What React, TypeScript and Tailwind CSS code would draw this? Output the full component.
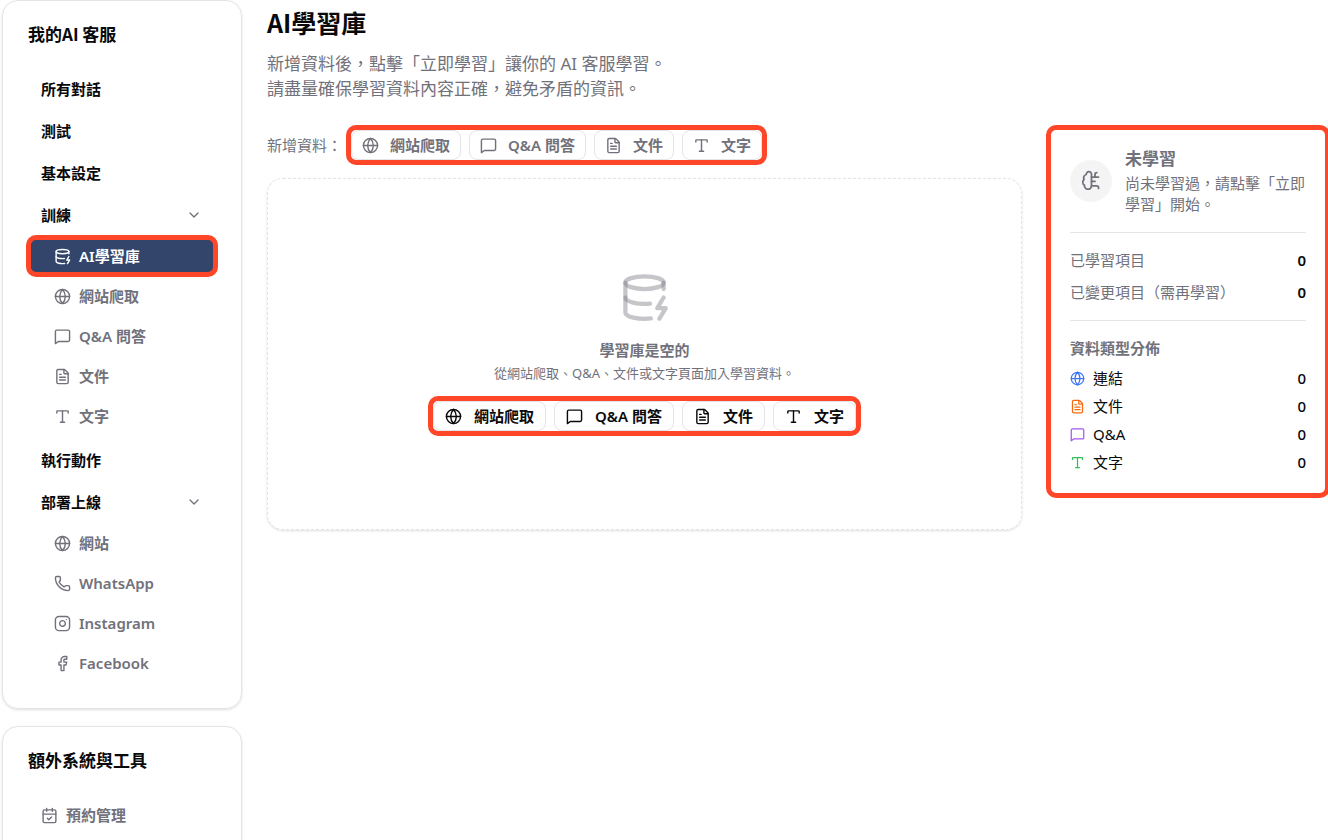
import React from 'react';
import { ChevronDown, DatabaseZap, Facebook, FileText, Globe, Instagram, Phone, Type } from 'lucide-react';

type IconType = React.ComponentType<{ className?: string }>;

const Svg: React.FC<{ className?: string; children: React.ReactNode }> = ({ className, children }) => (
  <svg
    className={className}
    viewBox="0 0 24 24"
    fill="none"
    stroke="currentColor"
    strokeWidth={2}
    strokeLinecap="round"
    strokeLinejoin="round"
    aria-hidden="true"
  >
    {children}
  </svg>
);

const MessageIcon: IconType = ({ className }) => (
  <Svg className={className}>
    <path d="M22 17a2 2 0 0 1-2 2H6l-4 3V5a2 2 0 0 1 2-2h16a2 2 0 0 1 2 2z" />
  </Svg>
);

const BrainIcon: IconType = ({ className }) => (
  <Svg className={className}>
    <path d="M12 5a3 3 0 1 0-5.997.125 4 4 0 0 0-2.526 5.77 4 4 0 0 0 .556 6.588A4 4 0 1 0 12 18Z" />
    <path d="M12 13h4M12 18h6a2 2 0 0 1 2 2v1M12 8h8M16 8V5a2 2 0 0 1 2-2" />
  </Svg>
);

const CalendarCheckIcon: IconType = ({ className }) => (
  <Svg className={className}>
    <path d="M8 2v4M16 2v4M3 10h18M9 16l2 2 4-4" />
    <rect width="18" height="18" x="3" y="4" rx="2" />
  </Svg>
);

const sources: { label: string; icon: IconType }[] = [
  { label: '網站爬取', icon: Globe },
  { label: 'Q&A 問答', icon: MessageIcon },
  { label: '文件', icon: FileText },
  { label: '文字', icon: Type },
];

const channels: { label: string; icon: IconType }[] = [
  { label: '網站', icon: Globe },
  { label: 'WhatsApp', icon: Phone },
  { label: 'Instagram', icon: Instagram },
  { label: 'Facebook', icon: Facebook },
];

const distribution: { label: string; icon: IconType; color: string }[] = [
  { label: '連結', icon: Globe, color: 'text-[#3b76f6]' },
  { label: '文件', icon: FileText, color: 'text-[#f76b10]' },
  { label: 'Q&A', icon: MessageIcon, color: 'text-[#a855f7]' },
  { label: '文字', icon: Type, color: 'text-[#34bd59]' },
];

const NavLink: React.FC<{ label: string }> = ({ label }) => (
  <a href="#" className="flex h-[42px] items-center px-[13px] text-[15px] font-semibold text-zinc-950">
    {label}
  </a>
);

const NavGroup: React.FC<{ label: string; children: React.ReactNode }> = ({ label, children }) => (
  <div className="pb-[3px]">
    <button className="flex h-[42px] w-full items-center justify-between px-[13px] text-[15px] font-semibold text-zinc-950">
      {label}
      <ChevronDown className="mr-px size-4 text-zinc-500" />
    </button>
    {children}
  </div>
);

const SubLink: React.FC<{ label: string; icon: IconType }> = ({ label, icon: Icon }) => (
  <a href="#" className="flex h-10 items-center gap-2 px-[26px] text-[15px] font-semibold text-zinc-500">
    <Icon className="size-[17px] shrink-0" />
    {label}
  </a>
);

const SourceButtons: React.FC<{ muted?: boolean }> = ({ muted }) => (
  <div
    className={`flex gap-2 rounded-[10px] border-[5px] border-[#ff4628] ${muted ? 'text-zinc-500' : 'text-zinc-950'}`}
  >
    {sources.map(({ label, icon: Icon }) => (
      <button
        key={label}
        className={`flex h-[30px] items-center rounded-lg border border-zinc-200 text-[15px] font-semibold ${
          muted ? 'gap-[11px] px-[10px]' : 'gap-3 px-[11px]'
        }`}
      >
        <Icon className="size-[17px]" />
        {label}
      </button>
    ))}
  </div>
);

const Sidebar: React.FC = () => (
  <aside className="flex w-60 shrink-0 flex-col gap-[17px]">
    <nav className="rounded-2xl border border-zinc-200 px-[25px] pb-[22px] shadow-sm">
      <h2 className="pt-5 pb-[22px] font-['Noto_Sans_CJK_TC',sans-serif] text-[17px] leading-[25px] font-bold text-zinc-950">
        我的AI 客服
      </h2>
      <NavLink label="所有對話" />
      <NavLink label="測試" />
      <NavLink label="基本設定" />
      <NavGroup label="訓練">
        <a
          href="#"
          className="-mx-[2px] -my-px flex h-[42px] items-center gap-2 rounded-[10px] border-[5px] border-[#ff4628] bg-[#33456b] px-[23px] text-[15px] font-semibold text-white"
        >
          <DatabaseZap className="size-[17px]" />
          AI學習庫
        </a>
        {sources.map((item) => (
          <SubLink key={item.label} {...item} />
        ))}
      </NavGroup>
      <NavLink label="執行動作" />
      <NavGroup label="部署上線">
        {channels.map((item) => (
          <SubLink key={item.label} {...item} />
        ))}
      </NavGroup>
    </nav>

    <nav className="rounded-2xl border border-zinc-200 px-[25px] pb-[22px] shadow-sm">
      <h2 className="pt-5 pb-[22px] font-['Noto_Sans_CJK_TC',sans-serif] text-[17px] leading-[25px] font-bold text-zinc-950">
        額外系統與工具
      </h2>
      <a href="#" className="flex h-[42px] items-center gap-2 px-[13px] text-[15px] font-semibold text-zinc-500">
        <CalendarCheckIcon className="size-[17px]" />
        預約管理
      </a>
    </nav>
  </aside>
);

const StatusCard: React.FC = () => (
  <section className="-mr-[2px] w-[284px] shrink-0 self-start rounded-[10px] border-[5px] border-[#ff4628] px-[19px] pt-4 pb-5">
    <div className="flex items-center gap-[13px] border-b border-zinc-200 pb-[17px]">
      <div className="flex size-[42px] shrink-0 items-center justify-center rounded-full bg-zinc-100 text-zinc-500">
        <BrainIcon className="size-[21px]" />
      </div>
      <div className="text-zinc-500">
        <h3 className="pb-[2px] text-[17px] leading-[25px] font-semibold">未學習</h3>
        <p className="text-[15px] leading-[21px]">尚未學習過，請點擊「立即學習」開始。</p>
      </div>
    </div>
    <dl className="flex flex-col gap-[10px] border-b border-zinc-200 pt-4 pb-[17px] text-[15px] leading-[22px]">
      <div className="flex justify-between">
        <dt className="text-zinc-500">已學習項目</dt>
        <dd className="font-semibold text-zinc-950">0</dd>
      </div>
      <div className="flex justify-between">
        <dt className="text-zinc-500">已變更項目（需再學習）</dt>
        <dd className="font-semibold text-zinc-950">0</dd>
      </div>
    </dl>
    <h4 className="pt-4 pb-2 text-[15px] leading-[22px] font-semibold text-zinc-500">資料類型分佈</h4>
    <ul className="flex flex-col gap-[6px] text-[15px] leading-[22px] text-zinc-950">
      {distribution.map(({ label, icon: Icon, color }) => (
        <li key={label} className="flex items-center gap-2">
          <Icon className={`size-[15px] ${color}`} />
          <span>{label}</span>
          <span className="ml-auto font-medium">0</span>
        </li>
      ))}
    </ul>
  </section>
);

const App: React.FC = () => {
  return (
    <div
      lang="zh-Hant"
      className="flex min-h-screen gap-[25px] overflow-hidden bg-white pl-[2px] font-['Noto_Sans','Noto_Sans_CJK_TC',sans-serif]"
    >
      <Sidebar />
      <main className="min-w-0 flex-1">
        <h1 className="pt-[3px] font-['Noto_Sans_CJK_TC',sans-serif] text-[25px] leading-[38px] font-bold text-zinc-950">
          AI學習庫
        </h1>
        <p className="pt-[10px] text-[17px] leading-[25px] text-zinc-500">
          新增資料後，點擊「立即學習」讓你的 AI 客服學習。
          <br />
          請盡量確保學習資料內容正確，避免矛盾的資訊。
        </p>

        <div className="flex gap-6 pt-6">
          <div className="min-w-0 flex-1">
            <div className="flex items-center gap-1">
              <span className="text-[15px] text-zinc-500">新增資料：</span>
              <SourceButtons muted />
            </div>
            <div className="mt-[13px] flex h-[352px] flex-col items-center justify-center rounded-2xl border border-dashed border-zinc-200 shadow-sm">
              <DatabaseZap className="size-[51px] text-zinc-500/40" />
              <h3 className="pt-4 text-[15px] leading-[22px] font-semibold text-zinc-500">學習庫是空的</h3>
              <p className="pt-[3px] pb-[14px] text-[13px] leading-[18px] text-zinc-500">
                從網站爬取、Q&A、文件或文字頁面加入學習資料。
              </p>
              <SourceButtons />
            </div>
          </div>
          <StatusCard />
        </div>
      </main>
    </div>
  );
};

export default App;
